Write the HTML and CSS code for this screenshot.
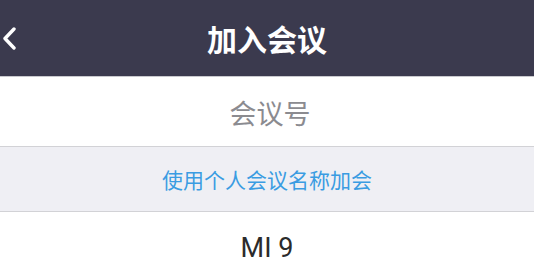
FILE: index.html
```html
<!DOCTYPE html>
<html lang="zh-CN">
<head>
    <meta charset="UTF-8">
    <meta name="viewport" content="width=device-width, initial-scale=1.0">
    <title>加入会议</title>
    <link rel="stylesheet" href="styles.css">
</head>
<body>
    <div class="topbar">
        <a class="back" href="#">
            <svg width="20" height="24" viewBox="0 0 20 24">
                <polyline points="14,3 5,12.5 14,22" fill="none" stroke="#ffffff" stroke-width="3.4" stroke-linecap="round" stroke-linejoin="round"/>
            </svg>
        </a>
        <h1>加入会议</h1>
    </div>

    <div class="row field">会议号</div>

    <div class="row link-row">
        <a href="#">使用个人会议名称加会</a>
    </div>

    <div class="row name">MI 9</div>
</body>
</html>
```

FILE: styles.css
```css
body {
    margin: 0;
    font-family: "Noto Sans CJK SC", "Noto Sans", sans-serif;
    background-color: #ffffff;
    width: 534px;
    height: 276px;
    overflow: hidden;
}

.topbar {
    position: relative;
    height: 76px;
    background-color: #3b3a4e;
    border-bottom: 1px solid #c9c9ce;
    display: flex;
    align-items: center;
    justify-content: center;
}

.topbar h1 {
    margin: 0;
    color: #ffffff;
    font-size: 30px;
    font-weight: bold;
    line-height: 1;
}

/* back arrow sits over the bar, left side */
.back {
    position: absolute;
    left: 0;
    top: 26px;
    display: block;
    width: 20px;
    height: 24px;
}

.back svg {
    display: block;
}

.row {
    display: flex;
    align-items: center;
    justify-content: center;
}

.field {
    height: 70px;
    padding-top: 2px;
    padding-left: 6px;
    box-sizing: border-box;
    color: #8b8b90;
    font-size: 27px;
    border-bottom: 1px solid #d2d2d6;
}

.link-row {
    height: 64px;
    background-color: #efeff4;
    border-bottom: 1px solid #d2d2d6;
}

.link-row a {
    color: #3a9ce2;
    font-size: 21px;
    text-decoration: none;
}

.name {
    height: 64px;
    padding-top: 8px;
    box-sizing: border-box;
    color: #2b2b2b;
    font-family: "Roboto", "Noto Sans", sans-serif;
    font-size: 27px;
}
```
